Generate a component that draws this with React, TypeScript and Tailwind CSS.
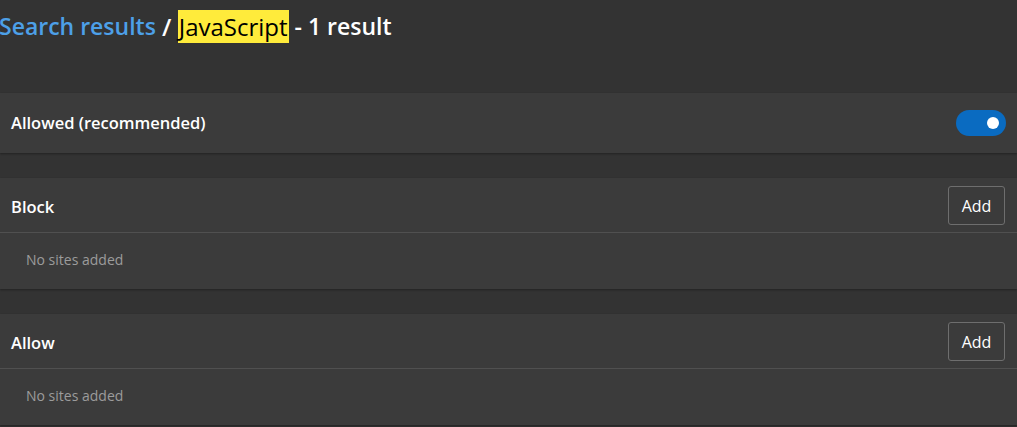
import React from 'react';

const sections = [
  { title: 'Block' },
  { title: 'Allow' },
] as const;

function Toggle() {
  return (
    <span className="flex h-[26px] w-[50px] items-center justify-end rounded-full bg-[#0a6bc1] pr-[7px]">
      <span className="h-[12px] w-[12px] rounded-full bg-white" />
    </span>
  );
}

export default function App() {
  return (
    <div
      className="min-h-[427px] overflow-hidden bg-[#333333] text-white"
      style={{ fontFamily: '"Open Sans", "Noto Sans", sans-serif' }}
    >
      <h1 className="-ml-[1px] flex h-[93px] items-start pt-[10px] text-[23px] font-semibold leading-[33px]">
        <span className="text-[#4da0e8]">Search results</span>
        <span className="whitespace-pre text-[24px]"> / </span>
        <mark className="bg-[#ffeb3b] px-[1px] text-[24px] font-normal text-black">JavaScript</mark>
        <span className="whitespace-pre"> - 1 result</span>
      </h1>

      <div className="flex flex-col gap-[25px]">
        <div className="flex h-[60px] items-center justify-between bg-[#3b3b3b] px-[11px] shadow-[0_1px_2px_rgba(0,0,0,0.35)]">
          <span className="text-[16.5px] font-semibold">Allowed (recommended)</span>
          <Toggle />
        </div>

        {sections.map(({ title }) => (
          <div key={title} className="bg-[#3b3b3b] shadow-[0_1px_2px_rgba(0,0,0,0.35)]">
            <div className="flex h-[55px] items-center justify-between border-b border-[#505050] pl-[11px] pr-[12px]">
              <span className="pt-[4px] text-[16.5px] font-semibold">{title}</span>
              <button className="h-[39px] w-[57px] rounded-[3px] border border-[#6e6e6e] pt-[1px] text-[16px] text-white">
                Add
              </button>
            </div>
            <div className="flex h-[56px] items-center pb-[3px] pl-[26px] text-[14px] text-[#9c9c9c]">
              No sites added
            </div>
          </div>
        ))}
      </div>
    </div>
  );
}
